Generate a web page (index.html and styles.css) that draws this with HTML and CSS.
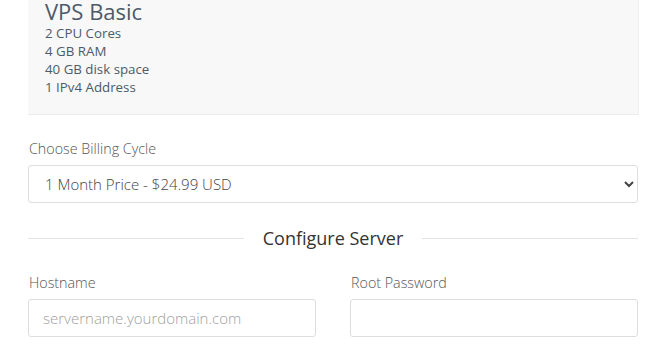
FILE: index.html
```html
<!DOCTYPE html>
<html lang="en">
<head>
    <meta charset="UTF-8" />
    <meta name="viewport" content="width=device-width, initial-scale=1" />
    <title>Configure</title>
    <link rel="stylesheet" href="styles.css">
</head>
<body>
<div class="container">
    <div class="product-info">
        <h2>VPS Basic</h2>
        <ul class="features">
            <li>2 CPU Cores</li>
            <li>4 GB RAM</li>
            <li>40 GB disk space</li>
            <li>1 IPv4 Address</li>
        </ul>
    </div>

    <div class="form-group billing">
        <label for="billingcycle">Choose Billing Cycle</label>
        <select id="billingcycle" name="billingcycle">
            <option value="monthly">1 Month Price - $24.99 USD</option>
            <option value="quarterly">3 Month Price - $71.97 USD</option>
        </select>
    </div>

    <div class="sub-heading">
        <span>Configure Server</span>
    </div>

    <div class="form-row">
        <div class="form-group">
            <label for="hostname">Hostname</label>
            <input type="text" id="hostname" name="hostname" placeholder="servername.yourdomain.com" />
        </div>
        <div class="form-group">
            <label for="rootpw">Root Password</label>
            <input type="password" id="rootpw" name="rootpw" />
        </div>
    </div>
</div>
</body>
</html>
```

FILE: styles.css
```css
body {
    font-family: "Open Sans", "Noto Sans", sans-serif;
    margin: 0;
    background-color: white;
    color: #333;
}
.container {
    padding: 0 27px 0 28px;
}
.product-info {
    background-color: #f8f8f8;
    border-bottom: 1px solid #ececec;
    box-shadow: 1px 0 0 #f0f0f0;
    padding: 0 17px 18px 17px;
    color: #4c5a6b;
}
.product-info h2 {
    margin: 0;
    font-size: 22px;
    font-weight: normal;
    line-height: 22px;
}
.features {
    list-style: none;
    margin: 2px 0 0 0;
    padding: 0;
    font-size: 13.3px;
    line-height: 18px;
}
.form-group label {
    display: block;
    font-size: 14.3px;
    font-weight: 300;
    line-height: 20px;
    color: #555;
    margin-bottom: 6px;
    padding-left: 1px;
}
.billing {
    margin-top: 24px;
}
select, input {
    width: 100%;
    height: 38px;
    box-sizing: border-box;
    border: 1px solid #ddd;
    border-radius: 3px;
    background-color: white;
    font-family: inherit;
    font-size: 15px;
    font-weight: 300;
    color: #444;
    padding: 0 12px;
}
input {
    padding: 0 14px;
}
input::placeholder {
    color: #a0a0a0;
}
.sub-heading {
    display: flex;
    align-items: center;
    gap: 19px;
    margin-top: 22px;
    font-size: 18px;
    line-height: 26px;
    color: #333;
}
.sub-heading::before,
.sub-heading::after {
    content: "";
    flex: 1;
    border-top: 1px solid #e2e2e2;
}
.form-row {
    display: flex;
    gap: 34px;
    margin-top: 22px;
}
.form-row .form-group {
    flex: 1;
}
```
